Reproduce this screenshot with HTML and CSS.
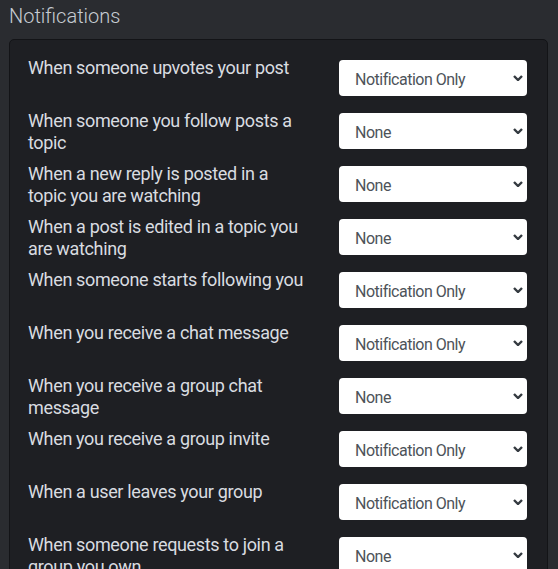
FILE: index.html
```html
<!DOCTYPE html>
<html>
<head>
<meta charset="utf-8">
<link rel="stylesheet" href="styles.css">
</head>
<body>
<h2 class="title">Notifications</h2>
<div class="card">
  <div class="row"><label class="label">When someone upvotes your post</label><div class="select"><span>Notification Only</span><svg class="chev" width="10" height="6" viewBox="0 0 10 6"><path d="M1 1l4 4 4-4" fill="none" stroke="#343a40" stroke-width="2.4"/></svg></div></div>
  <div class="row"><label class="label">When someone you follow posts a topic</label><div class="select"><span>None</span><svg class="chev" width="10" height="6" viewBox="0 0 10 6"><path d="M1 1l4 4 4-4" fill="none" stroke="#343a40" stroke-width="2.4"/></svg></div></div>
  <div class="row"><label class="label">When a new reply is posted in a topic you are watching</label><div class="select"><span>None</span><svg class="chev" width="10" height="6" viewBox="0 0 10 6"><path d="M1 1l4 4 4-4" fill="none" stroke="#343a40" stroke-width="2.4"/></svg></div></div>
  <div class="row"><label class="label">When a post is edited in a topic you are watching</label><div class="select"><span>None</span><svg class="chev" width="10" height="6" viewBox="0 0 10 6"><path d="M1 1l4 4 4-4" fill="none" stroke="#343a40" stroke-width="2.4"/></svg></div></div>
  <div class="row"><label class="label">When someone starts following you</label><div class="select"><span>Notification Only</span><svg class="chev" width="10" height="6" viewBox="0 0 10 6"><path d="M1 1l4 4 4-4" fill="none" stroke="#343a40" stroke-width="2.4"/></svg></div></div>
  <div class="row"><label class="label">When you receive a chat message</label><div class="select"><span>Notification Only</span><svg class="chev" width="10" height="6" viewBox="0 0 10 6"><path d="M1 1l4 4 4-4" fill="none" stroke="#343a40" stroke-width="2.4"/></svg></div></div>
  <div class="row"><label class="label">When you receive a group chat message</label><div class="select"><span>None</span><svg class="chev" width="10" height="6" viewBox="0 0 10 6"><path d="M1 1l4 4 4-4" fill="none" stroke="#343a40" stroke-width="2.4"/></svg></div></div>
  <div class="row"><label class="label">When you receive a group invite</label><div class="select"><span>Notification Only</span><svg class="chev" width="10" height="6" viewBox="0 0 10 6"><path d="M1 1l4 4 4-4" fill="none" stroke="#343a40" stroke-width="2.4"/></svg></div></div>
  <div class="row"><label class="label">When a user leaves your group</label><div class="select"><span>Notification Only</span><svg class="chev" width="10" height="6" viewBox="0 0 10 6"><path d="M1 1l4 4 4-4" fill="none" stroke="#343a40" stroke-width="2.4"/></svg></div></div>
  <div class="row"><label class="label">When someone requests to join a group you own</label><div class="select"><span>None</span><svg class="chev" width="10" height="6" viewBox="0 0 10 6"><path d="M1 1l4 4 4-4" fill="none" stroke="#343a40" stroke-width="2.4"/></svg></div></div>
</div>
</body>
</html>
```
FILE: styles.css
```css
html, body {
  margin: 0;
  padding: 0;
  background: #2a2c30;
  font-family: Roboto, "Liberation Sans", sans-serif;
  overflow: hidden;
}
.title {
  margin: 0;
  padding: 3px 9px 0;
  height: 35px;
  box-sizing: border-box;
  font-size: 20px;
  font-weight: 300;
  color: #c7ccd3;
  line-height: 26px;
}
.card {
  margin: 4px 10px 0 9px;
  background: #1e1f23;
  border: 1px solid #131417;
  border-radius: 5px;
  padding: 17px 20px 0 18px;
}
.row {
  display: grid;
  grid-template-columns: 280px 188px;
  column-gap: 31px;
  height: 53px;
}
.label {
  font-size: 18px;
  line-height: 22px;
  color: #d9dce0;
  letter-spacing: -0.35px;
}
.select {
  margin-top: 3px;
  height: 36px;
  box-sizing: border-box;
  background: #fff;
  border-radius: 4px;
  display: flex;
  align-items: center;
  justify-content: space-between;
  padding: 3px 4px 0 16px;
  font-size: 16px;
  letter-spacing: -0.5px;
  color: #4d5359;
}
.chev {
  display: block;
  margin-top: -3px;
}
```
